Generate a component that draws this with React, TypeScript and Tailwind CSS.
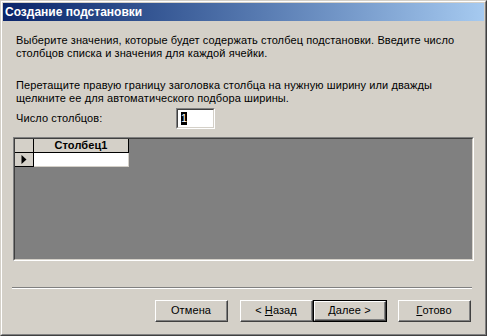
import React from "react";

const font = { fontFamily: '"Liberation Sans", Arial, sans-serif' };

function Btn({ children, def }: { children: React.ReactNode; def?: boolean }) {
  return (
    <div className={def ? "border border-black" : ""}>
      <div className="border-t border-l border-white border-r border-b border-r-[#404040] border-b-[#404040]">
        <div
          className={
            (def ? "w-[70px] h-[18px]" : "w-[71px] h-[20px]") +
            " border-r border-b border-[#808080] bg-[#d4d0c8] flex items-center justify-center text-[11px] text-black whitespace-pre"
          }
        >
          {children}
        </div>
      </div>
    </div>
  );
}

export default function App() {
  return (
    <div className="w-[487px] h-[336px] bg-[#d4d0c8]" style={font}>
      <div className="w-full h-full border border-[#d4d0c8] border-r-[#404040] border-b-[#404040]">
        <div className="w-full h-full border border-white border-r-[#808080] border-b-[#808080]">
          <div className="w-full h-full border border-[#d4d0c8] flex flex-col">
            <div className="h-[18px] shrink-0 bg-gradient-to-r from-[#0a246a] to-[#a6caf0] flex items-center pl-[2px]">
              <span className="text-white font-bold text-[12px]">Создание подстановки</span>
            </div>
            <div className="flex flex-col px-[13px] text-[11px] leading-[13px] text-black tracking-[0.1px]">
              <p className="mt-[13px]">
                Выберите значения, которые будет содержать столбец подстановки. Введите число
                <br />
                столбцов списка и значения для каждой ячейки.
              </p>
              <p className="mt-[19px]">
                Перетащите правую границу заголовка столбца на нужную ширину или дважды
                <br />
                щелкните ее для автоматического подбора ширины.
              </p>
              <div className="mt-[3px] flex items-center">
                <span className="w-[160px]">Число столбцов:</span>
                <div className="border border-[#808080] border-r-white border-b-white">
                  <div className="w-[37px] h-[19px] border border-[#404040] border-r-[#d4d0c8] border-b-[#d4d0c8] bg-white flex items-center pl-[3px]">
                    <span className="bg-black text-white w-[6px] h-[13px] leading-[13px] flex justify-center">1</span>
                  </div>
                </div>
              </div>
              <div className="mt-[8px] -ml-[3px] w-[461px] h-[124px] shrink-0 border border-[#808080] border-r-white border-b-white">
                <div className="w-full h-full border border-[#404040] border-r-[#d4d0c8] border-b-[#d4d0c8] bg-[#808080]">
                  <div className="flex">
                    <div className="w-[19px] h-[14px] bg-[#d4d0c8] border-r border-b border-black" />
                    <div className="w-[95px] h-[14px] bg-[#d4d0c8] border-r border-b border-black flex items-center justify-center font-bold">
                      Столбец1
                    </div>
                  </div>
                  <div className="flex">
                    <div className="w-[19px] h-[14px] bg-[#d4d0c8] border-r border-b border-black flex items-center justify-center">
                      <svg width="6" height="9" viewBox="0 0 6 9">
                        <path d="M0.5 0 L5.5 4.5 L0.5 9 Z" fill="black" />
                      </svg>
                    </div>
                    <div className="w-[95px] h-[14px] bg-white border-r border-b border-[#d4d0c8]" />
                  </div>
                </div>
              </div>
              <div className="mt-[26px] -ml-[4px] w-[460px] border-t border-[#808080] border-b border-b-white" />
              <div className="mt-[11px] flex justify-end">
                <Btn>Отмена</Btn>
                <div className="w-[12px]" />
                <Btn>
                  {"< "}
                  <u>Н</u>азад
                </Btn>
                <Btn def>
                  <u>Д</u>
                  {"алее >"}
                </Btn>
                <div className="w-[11px]" />
                <Btn>
                  <u>Г</u>отово
                </Btn>
              </div>
            </div>
          </div>
        </div>
      </div>
    </div>
  );
}
